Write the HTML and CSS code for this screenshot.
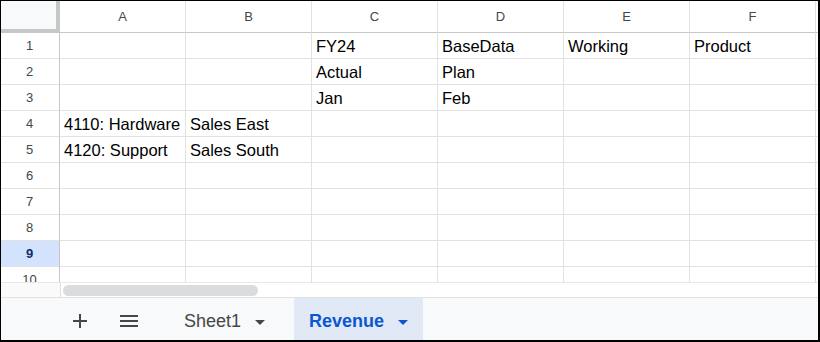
FILE: index.html
```html
<!DOCTYPE html>
<html>
<head>
<meta charset="utf-8">
<link rel="stylesheet" href="styles.css">
</head>
<body>
<div class="frame">
  <div class="sheet">
    <div class="grid">
      <div class="corner"></div>
      <div class="colh">A</div><div class="colh">B</div><div class="colh">C</div><div class="colh">D</div><div class="colh">E</div><div class="colh">F</div><div class="colh end"></div>

      <div class="rowh">1</div><div class="cell"></div><div class="cell"></div><div class="cell">FY24</div><div class="cell">BaseData</div><div class="cell">Working</div><div class="cell">Product</div><div class="cell end"></div>
      <div class="rowh">2</div><div class="cell"></div><div class="cell"></div><div class="cell">Actual</div><div class="cell">Plan</div><div class="cell"></div><div class="cell"></div><div class="cell end"></div>
      <div class="rowh">3</div><div class="cell"></div><div class="cell"></div><div class="cell">Jan</div><div class="cell">Feb</div><div class="cell"></div><div class="cell"></div><div class="cell end"></div>
      <div class="rowh">4</div><div class="cell">4110: Hardware</div><div class="cell">Sales East</div><div class="cell"></div><div class="cell"></div><div class="cell"></div><div class="cell"></div><div class="cell end"></div>
      <div class="rowh">5</div><div class="cell">4120: Support</div><div class="cell">Sales South</div><div class="cell"></div><div class="cell"></div><div class="cell"></div><div class="cell"></div><div class="cell end"></div>
      <div class="rowh">6</div><div class="cell"></div><div class="cell"></div><div class="cell"></div><div class="cell"></div><div class="cell"></div><div class="cell"></div><div class="cell end"></div>
      <div class="rowh">7</div><div class="cell"></div><div class="cell"></div><div class="cell"></div><div class="cell"></div><div class="cell"></div><div class="cell"></div><div class="cell end"></div>
      <div class="rowh">8</div><div class="cell"></div><div class="cell"></div><div class="cell"></div><div class="cell"></div><div class="cell"></div><div class="cell"></div><div class="cell end"></div>
      <div class="rowh sel">9</div><div class="cell"></div><div class="cell"></div><div class="cell"></div><div class="cell"></div><div class="cell"></div><div class="cell"></div><div class="cell end"></div>
      <div class="rowh">10</div><div class="cell"></div><div class="cell"></div><div class="cell"></div><div class="cell"></div><div class="cell"></div><div class="cell"></div><div class="cell end"></div>
    </div>
  </div>
  <div class="scrollrow">
    <div class="scrollpad"></div>
    <div class="track"><div class="thumb"></div></div>
  </div>
  <div class="tabs">
    <button class="iconbtn" aria-label="Add sheet">
      <svg width="14" height="14" viewBox="0 0 14 14"><path d="M7 0v14M0 7h14" stroke="#444746" stroke-width="2" fill="none"/></svg>
    </button>
    <button class="iconbtn" aria-label="All sheets">
      <svg width="18" height="12" viewBox="0 0 18 12"><path d="M0 1h18M0 6h18M0 11h18" stroke="#444746" stroke-width="2" fill="none"/></svg>
    </button>
    <div class="tab first">Sheet1<span class="caret"></span></div>
    <div class="tab active">Revenue<span class="caret"></span></div>
  </div>
</div>
</body>
</html>
```
FILE: styles.css
```css
html, body {
  margin: 0;
  padding: 0;
  background: #fff;
}
.frame {
  width: 820px;
  height: 342px;
  box-sizing: border-box;
  border-top: 1px solid #000;
  border-left: 1px solid #000;
  border-right: 2px solid #000;
  border-bottom: 2px solid #000;
  display: flex;
  flex-direction: column;
  overflow: hidden;
  font-family: "Liberation Sans", Arial, sans-serif;
}
.sheet {
  height: 281px;
  overflow: hidden;
  flex: none;
}
.grid {
  display: grid;
  grid-template-columns: 59px repeat(6, 126px) 60px;
  grid-template-rows: 32px;
  grid-auto-rows: 26px;
}
.corner {
  background: #f8f9fa;
  border-right: 4px solid #c4c7c5;
  border-bottom: 4px solid #c4c7c5;
}
.colh {
  border-right: 1px solid #e1e1e1;
  border-bottom: 1px solid #c4c7c5;
  color: #444746;
  font-size: 13px;
  display: flex;
  align-items: center;
  justify-content: center;
  padding-bottom: 1px;
}
.rowh {
  border-right: 1px solid #c4c7c5;
  border-bottom: 1px solid #e1e1e1;
  color: #444746;
  font-size: 13px;
  display: flex;
  align-items: center;
  justify-content: center;
  padding-right: 1px;
}
.rowh.sel {
  background: #d3e3fd;
  color: #0b2f6b;
  font-weight: bold;
}
.cell {
  border-right: 1px solid #e1e1e1;
  border-bottom: 1px solid #e1e1e1;
  font-size: 16.5px;
  color: #000;
  display: flex;
  align-items: center;
  padding-left: 4px;
  padding-top: 1px;
  box-sizing: border-box;
  white-space: nowrap;
  overflow: hidden;
}
.end {
  border-right: none;
}
.scrollrow {
  height: 16px;
  flex: none;
  display: flex;
  border-bottom: 1px solid #e1e1e1;
  border-top: 1px solid #e8e8e8;
  box-sizing: border-box;
}
.scrollpad {
  width: 59px;
  border-right: 1px solid #e1e1e1;
  background: #fafafa;
}
.track {
  flex: 1;
  padding: 2px 0 0 2px;
}
.thumb {
  width: 195px;
  height: 11px;
  border-radius: 6px;
  background: #dadce0;
}
.tabs {
  flex: 1;
  background: #f8f9fa;
  display: flex;
  align-items: stretch;
  padding-left: 62px;
}
.iconbtn {
  border: none;
  background: transparent;
  padding: 0;
  width: 34px;
  margin-right: 15px;
  display: flex;
  align-items: center;
  justify-content: center;
  padding-top: 4px;
}
.tab {
  display: flex;
  align-items: center;
  font-size: 18px;
  color: #444746;
  padding-top: 5px;
}
.tab.first {
  padding: 5px 29px 0 23px;
}
.tab .caret {
  width: 0;
  height: 0;
  border-left: 5px solid transparent;
  border-right: 5px solid transparent;
  border-top: 5px solid #444746;
  margin-left: 14px;
  margin-top: 1px;
}
.tab.active {
  background: #e1e9f7;
  color: #0b57d0;
  font-weight: bold;
  padding: 5px 15px 0 15px;
}
.tab.active .caret {
  border-top-color: #0b57d0;
}
```
